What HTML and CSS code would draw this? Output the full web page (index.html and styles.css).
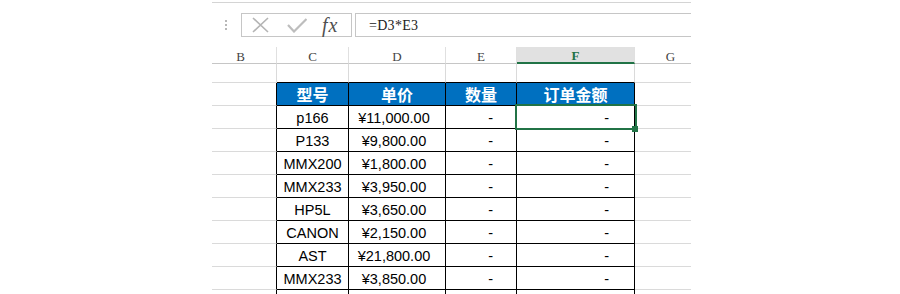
FILE: index.html
```html
<!DOCTYPE html>
<html lang="zh-CN">
<head>
    <meta charset="UTF-8">
    <meta name="viewport" content="width=device-width, initial-scale=1.0">
    <title>订单金额</title>
    <link rel="stylesheet" href="styles.css">
</head>
<body>
    <div class="sheet">
        <div class="ribbon-edge"></div>

        <div class="formula-bar">
            <div class="grip">
                <svg width="2" height="10" viewBox="0 0 2 10">
                    <rect x="0" y="0" width="2" height="2" fill="#b8b8b8"/>
                    <rect x="0" y="4" width="2" height="2" fill="#b8b8b8"/>
                    <rect x="0" y="8" width="2" height="2" fill="#b8b8b8"/>
                </svg>
            </div>
            <div class="fx-buttons">
                <svg class="btn-cancel" width="17" height="16" viewBox="0 0 17 16">
                    <path d="M1 1 L16 15 M16 1 L1 15" stroke="#b4b4b4" stroke-width="1.6" fill="none"/>
                </svg>
                <svg class="btn-enter" width="20" height="15" viewBox="0 0 20 15">
                    <path d="M1 7 L7 13.5 L19.5 1" stroke="#bdbdbd" stroke-width="2.2" fill="none"/>
                </svg>
                <span class="fx">fx</span>
            </div>
            <div class="formula">=D3*E3</div>
        </div>

        <div class="col-heads">
            <div class="col-head first">B</div>
            <div class="col-head">C</div>
            <div class="col-head">D</div>
            <div class="col-head">E</div>
            <div class="col-head active">F</div>
            <div class="col-head last">G</div>
        </div>

        <div class="rows">
            <!-- row 1 -->
            <div class="cell short"></div>
            <div class="cell short edge-top"></div>
            <div class="cell short edge-top"></div>
            <div class="cell short edge-top"></div>
            <div class="cell short edge-top"></div>
            <div class="cell short last"></div>

            <!-- header -->
            <div class="cell edge-left"></div>
            <div class="cell t th">型号</div>
            <div class="cell t th">单价</div>
            <div class="cell t th">数量</div>
            <div class="cell t th">订单金额</div>
            <div class="cell last"></div>

            <div class="cell edge-left"></div>
            <div class="cell t">p166</div>
            <div class="cell t price">¥11,000.00</div>
            <div class="cell t qty">-</div>
            <div class="cell t amt selected">-<div class="cursor"><div class="handle"></div></div></div>
            <div class="cell last"></div>

            <div class="cell edge-left"></div>
            <div class="cell t">P133</div>
            <div class="cell t price">¥9,800.00</div>
            <div class="cell t qty">-</div>
            <div class="cell t amt">-</div>
            <div class="cell last"></div>

            <div class="cell edge-left"></div>
            <div class="cell t">MMX200</div>
            <div class="cell t price">¥1,800.00</div>
            <div class="cell t qty">-</div>
            <div class="cell t amt">-</div>
            <div class="cell last"></div>

            <div class="cell edge-left"></div>
            <div class="cell t">MMX233</div>
            <div class="cell t price">¥3,950.00</div>
            <div class="cell t qty">-</div>
            <div class="cell t amt">-</div>
            <div class="cell last"></div>

            <div class="cell edge-left"></div>
            <div class="cell t">HP5L</div>
            <div class="cell t price">¥3,650.00</div>
            <div class="cell t qty">-</div>
            <div class="cell t amt">-</div>
            <div class="cell last"></div>

            <div class="cell edge-left"></div>
            <div class="cell t">CANON</div>
            <div class="cell t price">¥2,150.00</div>
            <div class="cell t qty">-</div>
            <div class="cell t amt">-</div>
            <div class="cell last"></div>

            <div class="cell edge-left"></div>
            <div class="cell t">AST</div>
            <div class="cell t price">¥21,800.00</div>
            <div class="cell t qty">-</div>
            <div class="cell t amt">-</div>
            <div class="cell last"></div>

            <div class="cell edge-left"></div>
            <div class="cell t">MMX233</div>
            <div class="cell t price">¥3,850.00</div>
            <div class="cell t qty">-</div>
            <div class="cell t amt">-</div>
            <div class="cell last"></div>

            <div class="cell edge-left"></div>
            <div class="cell t"></div>
            <div class="cell t"></div>
            <div class="cell t"></div>
            <div class="cell t"></div>
            <div class="cell last"></div>
        </div>
    </div>
</body>
</html>
```

FILE: styles.css
```css
body, html {
    margin: 0;
    padding: 0;
    height: 100%;
    overflow: hidden;
    background: #fff;
}
.sheet {
    width: 479px;
    margin-left: 212px;
}
.ribbon-edge {
    height: 2px;
    border-bottom: 1px solid #d4d4d4;
}

/* formula bar */
.formula-bar {
    display: flex;
    height: 24px;
    margin-top: 10px;
}
.grip {
    width: 29px;
    padding-left: 13px;
    box-sizing: border-box;
    display: flex;
    align-items: center;
}
.fx-buttons {
    width: 111px;
    box-sizing: border-box;
    border: 1px solid #c6c6c6;
    display: flex;
    align-items: center;
    padding-left: 10px;
}
.btn-cancel {
    margin-right: 18px;
}
.btn-enter {
    margin-right: 15px;
    margin-top: 1px;
}
.fx {
    font-family: "Liberation Serif", serif;
    font-style: italic;
    font-size: 20px;
    letter-spacing: 1px;
    color: #505050;
    line-height: 1;
}
.formula {
    flex: 1;
    margin-left: 3px;
    box-sizing: border-box;
    border: 1px solid #c6c6c6;
    border-right: none;
    padding-left: 13px;
    padding-top: 1px;
    display: flex;
    align-items: center;
    font-family: "Liberation Serif", serif;
    font-size: 14px;
    letter-spacing: 0.3px;
    color: #222;
}

/* column letters */
.col-heads {
    display: grid;
    grid-template-columns: 65px 72px 97px 71px 118px 56px;
    padding-top: 10px;
}
.col-head {
    height: 17px;
    box-sizing: border-box;
    border-right: 1px solid #e0e0e0;
    border-bottom: 1px solid #c6c6c6;
    display: flex;
    align-items: center;
    justify-content: center;
    padding-top: 3px;
    font-family: "Liberation Serif", serif;
    font-size: 13px;
    color: #444;
}
.col-head.first {
    padding-right: 7px;
}
.col-head.last {
    border-right: none;
    padding-left: 15px;
}
.col-head.active {
    background: #e1e1e1;
    border-bottom: 2px solid #217346;
    color: #217346;
    font-weight: bold;
}

/* cells */
.rows {
    display: grid;
    grid-template-columns: 65px 72px 97px 71px 118px 56px;
    grid-auto-rows: 23px;
    grid-template-rows: 19px;
}
.cell {
    box-sizing: border-box;
    border-right: 1px solid #dadada;
    border-bottom: 1px solid #dadada;
    display: flex;
    align-items: center;
    justify-content: center;
    padding-top: 2px;
    font-family: "Liberation Sans", Arial, sans-serif;
    font-size: 14.5px;
    color: #000;
    white-space: nowrap;
}
.cell.last {
    border-right: none;
}
.cell.edge-top {
    border-bottom-color: #000;
}
.cell.edge-left {
    border-right-color: #000;
}
.cell.t {
    border-right-color: #000;
    border-bottom-color: #000;
}
.cell.th {
    background: #0070c0;
    color: #fff;
    font-family: "Noto Sans CJK SC", sans-serif;
    font-weight: bold;
    font-size: 16px;
    padding-top: 0;
}
.cell.price {
    padding-right: 6px;
}
.cell.qty {
    justify-content: flex-end;
    padding-right: 23px;
}
.cell.amt {
    justify-content: flex-end;
    padding-right: 25px;
}
.selected {
    position: relative;
}
.cursor {
    position: absolute;
    top: -2px;
    left: -2px;
    right: -3px;
    bottom: -2px;
    border: 2px solid #217346;
}
.handle {
    position: absolute;
    right: -3px;
    bottom: -4px;
    width: 6px;
    height: 6px;
    background: #217346;
}
```
